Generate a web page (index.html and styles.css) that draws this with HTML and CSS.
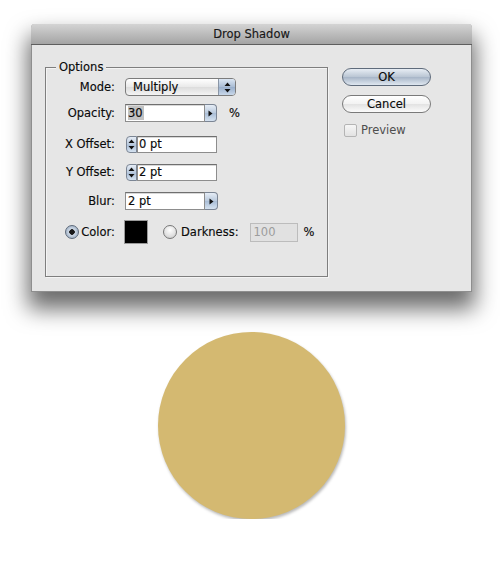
FILE: index.html
```html
<!DOCTYPE html>
<html lang="en">
<head>
    <meta charset="UTF-8">
    <title>Drop Shadow</title>
    <link rel="stylesheet" href="styles.css">
</head>
<body>
<div class="dialog">
    <div class="titlebar">Drop Shadow</div>
    <div class="body">
        <div class="group">
            <span class="legend">Options</span>
            <div class="row row-mode">
                <span class="lbl">Mode:</span>
                <div class="select">
                    <span class="select-text">Multiply</span>
                    <span class="updown">
                        <svg width="7" height="11" viewBox="0 0 7 11"><path d="M3.5 0.5 L6.5 4 L0.5 4 Z M0.5 7 L6.5 7 L3.5 10.5 Z" fill="#111"/></svg>
                    </span>
                </div>
            </div>
            <div class="row row-opacity">
                <span class="lbl">Opacity:</span>
                <div class="field"><span class="sel">30</span></div>
                <span class="arrow">
                    <svg width="5" height="7" viewBox="0 0 5 7"><path d="M0.5 0.5 L4.5 3.5 L0.5 6.5 Z" fill="#111"/></svg>
                </span>
                <span class="unit">%</span>
            </div>
            <div class="row row-x">
                <span class="lbl">X Offset:</span>
                <span class="stepper">
                    <svg width="7" height="11" viewBox="0 0 7 11"><path d="M3.5 0.5 L6.5 4 L0.5 4 Z M0.5 7 L6.5 7 L3.5 10.5 Z" fill="#111"/></svg>
                </span>
                <div class="field field-step">0 pt</div>
            </div>
            <div class="row row-y">
                <span class="lbl">Y Offset:</span>
                <span class="stepper">
                    <svg width="7" height="11" viewBox="0 0 7 11"><path d="M3.5 0.5 L6.5 4 L0.5 4 Z M0.5 7 L6.5 7 L3.5 10.5 Z" fill="#111"/></svg>
                </span>
                <div class="field field-step">2 pt</div>
            </div>
            <div class="row row-blur">
                <span class="lbl">Blur:</span>
                <div class="field">2 pt</div>
                <span class="arrow">
                    <svg width="5" height="7" viewBox="0 0 5 7"><path d="M0.5 0.5 L4.5 3.5 L0.5 6.5 Z" fill="#111"/></svg>
                </span>
            </div>
            <div class="row row-color">
                <span class="lbl"><span class="radio on"></span>Color:</span>
                <span class="swatch"></span>
                <span class="radio radio-dark"></span>
                <span class="dark-lbl">Darkness:</span>
                <div class="field field-off">100</div>
                <span class="unit">%</span>
            </div>
        </div>
        <div class="side">
            <button class="btn btn-default">OK</button>
            <button class="btn">Cancel</button>
            <div class="check"><span class="box"></span>Preview</div>
        </div>
    </div>
</div>
<div class="circle"></div>
</body>
</html>
```

FILE: styles.css
```css
*{  margin: 0;
    padding: 0;
    box-sizing: border-box;
}
body{
    background: #fff;
    font-family: "DejaVu Sans", "Liberation Sans", sans-serif;
    font-size: 11.5px;
    color: #0a0a0a;
    -webkit-text-stroke: 0.15px #0a0a0a;
}
.dialog{
    width: 441px;
    height: 268px;
    margin: 24px 0 0 31px;
    background: #e6e6e6;
    border: 1px solid #8e8e8e;
    border-top: none;
    border-radius: 4px 4px 0 0;
    box-shadow: 0 14px 22px 3px rgba(0,0,0,0.58);
}
.titlebar{
    height: 21px;
    line-height: 20px;
    text-align: center;
    color: #1a1a1a;
    background: linear-gradient(#d4d4d4, #a4a4a4);
    border-bottom: 1px solid #5e5e5e;
    border-radius: 4px 4px 0 0;
    margin: 0 -1px;
}
.body{
    display: flex;
    padding: 22px 0 0 13px;
}
.group{
    position: relative;
    width: 283px;
    height: 210px;
    border: 1px solid #7e7e7e;
    box-shadow: inset 1px 1px 0 #f4f4f4, 1px 1px 0 #f4f4f4;
    padding-top: 10px;
}
.legend{
    position: absolute;
    top: -8px;
    left: 10px;
    padding: 0 3px;
    background: #e6e6e6;
    line-height: 15px;
}
.row{
    display: flex;
    align-items: center;
    height: 18px;
}
.row-opacity{ margin-top: 8px; }
.row-x{ margin-top: 13px; }
.row-y{ margin-top: 10px; }
.row-blur{ margin-top: 11px; }
.row-color{ margin-top: 10px; height: 24px; }
.lbl{
    display: flex;
    align-items: center;
    justify-content: flex-end;
    width: 69px;
    margin-right: 10px;
}
.select{
    display: flex;
    width: 111px;
    height: 18px;
    border: 1px solid #7c7c7c;
    border-radius: 4px;
    background: linear-gradient(#ffffff, #e9e9e9 50%, #dcdcdc 51%, #f4f4f4);
    overflow: hidden;
}
.select-text{
    flex: 1;
    padding-left: 7px;
    line-height: 16px;
}
.updown{
    width: 17px;
    display: flex;
    align-items: center;
    justify-content: center;
    border-left: 1px solid #8a96a6;
    background: linear-gradient(#dbe6f3, #a9bcd4 50%, #98aecb 51%, #c9d8ea);
}
.field{
    width: 80px;
    height: 18px;
    line-height: 16px;
    padding-left: 2px;
    background: #fff;
    border: 1px solid #8d8d8d;
    border-top-color: #6f6f6f;
    box-shadow: inset 0 1px 0 #d8d8d8;
}
.sel{
    background: #c2c2c2;
    padding-right: 1px;
}
.field-step{ padding-left: 1px; }
.arrow{
    width: 12px;
    height: 18px;
    display: flex;
    align-items: center;
    justify-content: center;
    border: 1px solid #7b8594;
    border-left: none;
    border-radius: 0 4px 4px 0;
    background: linear-gradient(#e6edf6, #b9c9dd 50%, #a9bdd6 51%, #d5e2f0);
}
.row-blur .arrow{ width: 13px; }
.unit{
    margin-left: 12px;
}
.stepper{
    width: 11px;
    height: 17px;
    margin-left: 1px;
    display: flex;
    align-items: center;
    justify-content: center;
    border: 1px solid #7b8594;
    border-radius: 4px 0 0 4px;
    background: linear-gradient(#e6edf6, #b9c9dd 50%, #a9bdd6 51%, #d5e2f0);
}
.row-x .field, .row-y .field{ height: 17px; line-height: 15px; }
.radio{
    display: inline-block;
    width: 14px;
    height: 14px;
    border-radius: 50%;
    border: 1px solid #777;
    background: radial-gradient(circle at 50% 35%, #ffffff, #e0e0e0 60%, #c4c4c4);
    margin-right: 2px;
}
.radio.on{
    background: radial-gradient(circle, #1a1a1a 0 2.5px, #cfd9e6 3px, #a9b9cc 70%, #8ea1b9);
    border-color: #5e6a7a;
}
.swatch{
    width: 24px;
    height: 24px;
    margin-left: -1px;
    background: #000;
    border: 1px solid #9a9a9a;
}
.radio-dark{
    margin-left: 15px;
    margin-right: 4px;
}
.dark-lbl{
    margin-right: 11px;
}
.field-off{
    width: 48px;
    height: 19px;
    line-height: 17px;
    color: #9c9c9c;
    -webkit-text-stroke: 0;
    background: #e1e1e1;
    border: 1px solid #bcbcbc;
    box-shadow: none;
    padding-left: 3px;
}
.row-color .unit{ margin-left: 6px; }
.side{
    display: flex;
    flex-direction: column;
    margin-left: 14px;
    padding-top: 1px;
}
.btn{
    width: 89px;
    height: 18px;
    border-radius: 9px;
    border: 1px solid #7a7a7a;
    font-family: "DejaVu Sans", "Liberation Sans", sans-serif;
    font-size: 11.5px;
    color: #0a0a0a;
    -webkit-text-stroke: 0.15px #0a0a0a;
    line-height: 16px;
    background: linear-gradient(#ffffff, #f2f2f2 50%, #e2e2e2 51%, #fbfbfb);
}
.btn + .btn{ margin-top: 9px; }
.btn-default{
    border-color: #5f6b7b;
    background: linear-gradient(#e7edf4, #b9c5d3 50%, #a7b5c7 51%, #dfe7f0);
}
.check{
    display: flex;
    align-items: center;
    margin-top: 10px;
    margin-left: 2px;
    color: #4e4e4e;
    -webkit-text-stroke: 0;
}
.box{
    width: 13px;
    height: 13px;
    border: 1px solid #b4b4b4;
    border-radius: 2px;
    background: linear-gradient(#f6f6f6, #e2e2e2);
    margin-right: 4px;
}
.circle{
    width: 187px;
    height: 187px;
    margin: 40px 0 0 158px;
    border-radius: 50%;
    background: #d4b971;
    box-shadow: 1px 2px 3px rgba(0,0,0,0.28);
}
```
